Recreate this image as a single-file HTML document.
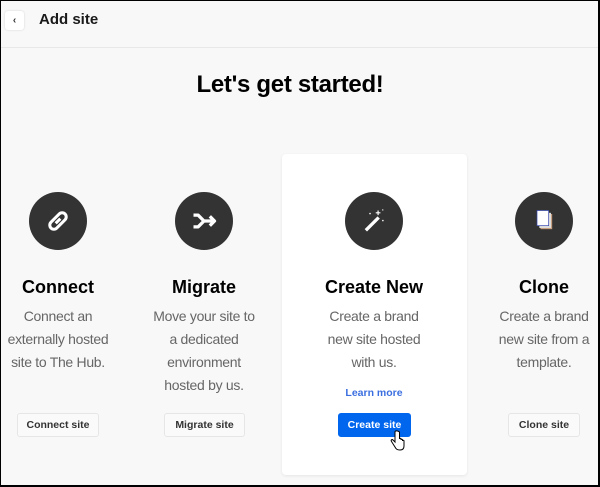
<!DOCTYPE html>
<html><head><meta charset="utf-8"><style>
*{margin:0;padding:0;box-sizing:border-box}
html,body{width:600px;height:487px;overflow:hidden;background:#fff}
body{font-family:"Liberation Sans",sans-serif;position:relative}
.frame{position:absolute;left:0;top:0;width:600px;height:487px;background:#f8f8f8;border:1px solid #000;border-bottom-width:2px;border-right-width:2px}
.hdr{position:absolute;left:1px;top:1px;width:597px;height:47px;border-bottom:1px solid #e8e8e8}
.back{position:absolute;left:4px;top:10px;width:19px;height:19px;background:#fff;border-radius:3px;box-shadow:0 0 2px rgba(0,0,0,.15);font-size:10px;text-align:center;line-height:19px;color:#333;font-weight:bold}
.ht{position:absolute;left:38px;top:10px;font-size:15px;font-weight:bold;color:#1a1a1a}
.title{position:absolute;left:0;width:580px;text-align:center;top:71px;font-size:24px;font-weight:bold;color:#000;letter-spacing:-.3px}
.card{position:absolute;left:282px;top:154px;width:185px;height:321px;background:#fff;border-radius:4px;box-shadow:0 1px 3px rgba(0,0,0,.08)}
.col{position:absolute;width:170px;margin-left:-85px;text-align:center}
.circ{position:absolute;top:192px;width:58px;height:58px;border-radius:50%;background:#333}
.circ svg{position:absolute;left:15px;top:15px}
.h{position:absolute;left:0;width:170px;top:277px;font-size:18px;font-weight:bold;color:#000}
.d{position:absolute;left:0;width:170px;top:305px;font-size:14px;line-height:23px;color:#666;white-space:nowrap;letter-spacing:-.3px}
.btn{position:absolute;top:413px;height:24px;background:#fafafa;border:1px solid #e6e6e6;border-radius:3px;font-size:10.5px;font-weight:bold;color:#333;line-height:22px;text-align:center}
</style></head><body>
<div class="frame"></div>
<div class="hdr"><div class="back">‹</div><div class="ht">Add site</div></div>
<div class="title">Let's get started!</div>
<div class="card"></div>

<div class="circ" style="left:29px"><svg width="28" height="28" viewBox="0 0 24 24" fill="none" stroke="#fff" stroke-width="2.6"><rect x="3.5" y="8.5" width="17" height="7" rx="3.5" transform="rotate(-45 12 12)"/><path d="M10 14l4-4"/></svg></div>
<div class="circ" style="left:175px"><svg width="28" height="28" viewBox="0 0 24 24" fill="none" stroke="#fff" stroke-width="2.8" stroke-linejoin="round"><path d="M3 7h4l5 5-5 5H3M12 12h9M17 8l4 4-4 4"/></svg></div>
<div class="circ" style="left:345px"><svg width="28" height="28" viewBox="0 0 24 24" fill="#fff"><path d="M4 19l11-11 2 2-11 11z"/><path d="M15 3h1v4h-1zM13.5 4.5h4v1h-4zM8 5h1.2v1.2H8zM19 11h1.2v1.2H19zM19 2h1v1h-1z"/></svg></div>
<div class="circ" style="left:515px"><svg width="28" height="28" viewBox="0 0 24 24"><rect x="9" y="6" width="10" height="13" fill="#c8a080"/><rect x="8" y="5" width="10" height="13" fill="#ddd"/><rect x="6" y="3" width="10" height="13" fill="#fff" stroke="#3344aa" stroke-width=".6"/></svg></div>

<div class="col" style="left:58px"><div class="h">Connect</div><div class="d">Connect an<br>externally hosted<br>site to The Hub.</div></div>
<div class="col" style="left:204px"><div class="h">Migrate</div><div class="d">Move your site to<br>a dedicated<br>environment<br>hosted by us.</div></div>
<div class="col" style="left:374px"><div class="h">Create New</div><div class="d">Create a brand<br>new site hosted<br>with us.</div>
<div style="position:absolute;left:0;width:170px;top:387px;font-size:10.5px;font-weight:bold;color:#3b6fe0">Learn more</div></div>
<div class="col" style="left:544px"><div class="h">Clone</div><div class="d">Create a brand<br>new site from a<br>template.</div></div>

<div class="btn" style="left:17px;width:82px">Connect site</div>
<div class="btn" style="left:164px;width:81px">Migrate site</div>
<div class="btn" style="left:338px;width:73px;background:#0066ee;border-color:#0066ee;color:#fff">Create site</div>
<div class="btn" style="left:508px;width:72px">Clone site</div>
<svg style="position:absolute;left:390px;top:430px" width="16" height="22" viewBox="0 0 16 22"><path d="M5 2v10l-2-2c-1-1-2.5 0-1.5 1.5L5 17c1 2 2 3 5 3s4-2 4-4v-5c0-1-1.5-1-1.5 0v-1c0-1-1.5-1-1.5 0v-1c0-1-1.5-1-1.5 0V2C7.5 0.5 5 0.5 5 2z" fill="#fff" stroke="#000" stroke-width="1"/></svg>
</body></html>
